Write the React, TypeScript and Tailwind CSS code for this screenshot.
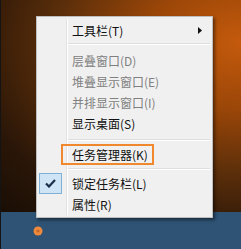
import React from "react";

const font = { fontFamily: '"Noto Sans CJK SC", "Noto Sans", sans-serif' };

function Item({ label, disabled, children }: { label: string; disabled?: boolean; children?: React.ReactNode }) {
  return (
    <div className="relative flex h-[21px] items-center pl-[35px]">
      {children}
      <span className={`text-[12px] leading-none ${disabled ? "text-[#808080]" : "text-[#111]"}`}>{label}</span>
    </div>
  );
}

function Sep({ h, top }: { h: string; top: string }) {
  return (
    <div className={`${h} ${top} flex flex-col`}>
      <div className="ml-[31px] mr-[2px] h-px bg-[#dedede]" />
      <div className="ml-[31px] mr-[2px] h-px bg-white" />
    </div>
  );
}

export default function App() {
  return (
    <div className="relative flex h-[249px] w-[241px] flex-col overflow-hidden border-l border-[#141414]" style={font}>
      <div className="flex-1 bg-[radial-gradient(ellipse_at_100%_20%,#c45a0c_0%,#9a4608_28%,#5a2e0a_55%,#2a1608_80%,#1a0e05_100%)]" />
      <div className="flex h-[37px] items-center bg-[#2e5374] pl-[32px]">
        <svg width="10" height="10" viewBox="0 0 10 10">
          <circle cx="5" cy="5" r="4.5" fill="#ef8a3c" />
          <circle cx="5" cy="5" r="1.6" fill="#c9652a" />
        </svg>
      </div>

      <div className="absolute left-[35px] top-[16px] h-[202px] w-[177px] border border-[#bdbdbd] bg-[#f0f0f0] pt-[3px] shadow-[2px_2px_3px_rgba(0,0,0,0.45)]">
        <div className="absolute bottom-[2px] left-[29px] top-[2px] flex">
          <div className="w-px bg-[#e2e2e2]" />
          <div className="w-px bg-white" />
        </div>
        <div className="relative flex flex-col">
          <div className="relative flex h-[21px] items-center pl-[35px]">
            <span className="text-[12px] leading-none text-[#111]">工具栏(T)</span>
            <svg className="absolute left-[161px] top-[7px]" width="4" height="7" viewBox="0 0 4 7">
              <path d="M0 0 L4 3.5 L0 7 Z" fill="#111" />
            </svg>
          </div>
          <div className="flex h-[9px] flex-col pt-[2px]">
            <div className="ml-[31px] mr-[2px] h-px bg-[#dedede]" />
            <div className="ml-[31px] mr-[2px] h-px bg-white" />
          </div>
          <Item label="层叠窗口(D)" disabled />
          <Item label="堆叠显示窗口(E)" disabled />
          <Item label="并排显示窗口(I)" disabled />
          <Item label="显示桌面(S)" />
          <div className="flex h-[10px] flex-col pt-[5px]">
            <div className="ml-[31px] mr-[2px] h-px bg-[#dedede]" />
            <div className="ml-[31px] mr-[2px] h-px bg-white" />
          </div>
          <Item label="任务管理器(K)">
            <div className="absolute left-[24px] top-[0px] h-[21px] w-[93px] border-2 border-[#f0882e]" />
          </Item>
          <div className="flex h-[8px] flex-col pt-[3px]">
            <div className="ml-[31px] mr-[2px] h-px bg-[#dedede]" />
            <div className="ml-[31px] mr-[2px] h-px bg-white" />
          </div>
          <Item label="锁定任务栏(L)">
            <div className="absolute left-[2px] top-0 flex h-[21px] w-[23px] items-center justify-center border border-[#7fb0d8] bg-[#cfe5f6]">
              <svg width="11" height="9" viewBox="0 0 11 9">
                <path d="M1 4.5 L4 7.5 L10 1" fill="none" stroke="#1b2f4a" strokeWidth="2.2" />
              </svg>
            </div>
          </Item>
          <Item label="属性(R)" />
        </div>
      </div>
    </div>
  );
}
